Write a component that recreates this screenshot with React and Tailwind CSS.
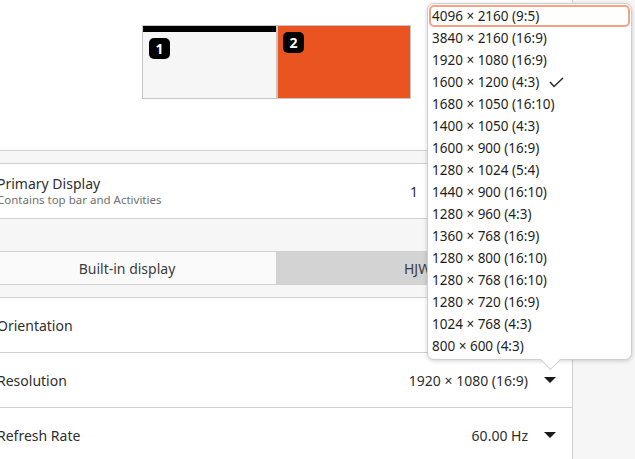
const resolutions = [
    "4096 × 2160 (9:5)",
    "3840 × 2160 (16:9)",
    "1920 × 1080 (16:9)",
    "1600 × 1200 (4:3)",
    "1680 × 1050 (16:10)",
    "1400 × 1050 (4:3)",
    "1600 × 900 (16:9)",
    "1280 × 1024 (5:4)",
    "1440 × 900 (16:10)",
    "1280 × 960 (4:3)",
    "1360 × 768 (16:9)",
    "1280 × 800 (16:10)",
    "1280 × 768 (16:10)",
    "1280 × 720 (16:9)",
    "1024 × 768 (4:3)",
    "800 × 600 (4:3)",
];

const DownArrow = () => (
    <svg width="12" height="6" viewBox="0 0 12 6" className="shrink-0">
        <path d="M0 0 L12 0 L6 6 Z" fill="#1a1a1a" />
    </svg>
);

const CheckMark = () => (
    <svg width="15" height="11" viewBox="0 0 15 11" className="ml-[10px] shrink-0">
        <polyline points="1,5 5,9.5 14,1" fill="none" stroke="#2a2a2a" strokeWidth="1.5" />
    </svg>
);

const Badge = ({ n }) => (
    <div className="w-[21px] h-[21px] rounded-[5px] bg-black text-white flex items-center justify-center text-[14px] font-bold leading-none">
        {n}
    </div>
);

const SettingRow = ({ label, value }) => (
    <div className="h-[55px] shrink-0 border-b border-[#d0d0d0] flex items-center bg-white">
        <span className="-ml-[3px] text-[14px] text-[#2e2e2e]">{label}</span>
        {value && (
            <div className="ml-auto flex items-center gap-[16px] pr-[16px] text-[14px] text-[#2e2e2e]">
                <span>{value}</span>
                <DownArrow />
            </div>
        )}
    </div>
);

export default function App() {
    return (
        <div className="relative w-[635px] h-[459px] overflow-hidden bg-white flex font-['Noto_Sans',sans-serif]">
            {/* main panel */}
            <div className="w-[573px] shrink-0 border-r border-[#d0d0d0] flex flex-col overflow-hidden">
                {/* display arrangement */}
                <div className="h-[150px] shrink-0 pt-[25px] pl-[142px] flex items-start">
                    <div className="w-[135px] h-[74px] border border-[#c6c6c6] bg-[#f6f6f6] flex flex-col">
                        <div className="h-[6px] bg-black" />
                        <div className="pl-[6px] pt-[6px]">
                            <Badge n="1" />
                        </div>
                    </div>
                    <div className="w-[134px] h-[74px] border border-[#c6c6c6] bg-[#e95420] pl-[5px] pt-[6px]">
                        <Badge n="2" />
                    </div>
                </div>

                <div className="h-[14px] shrink-0 border-y border-[#d0d0d0] bg-[#f6f6f6]" />

                {/* primary display */}
                <div className="h-[55px] shrink-0 border-b border-[#d0d0d0] flex items-center">
                    <div className="-ml-[3px] flex flex-col leading-tight">
                        <span className="text-[14px] text-[#2e2e2e]">Primary Display</span>
                        <span className="text-[11.5px] text-[#707070]">Contains top bar and Activities</span>
                    </div>
                    <span className="ml-auto mr-[154px] text-[14px] text-[#2e2e2e]">1</span>
                </div>

                <div className="h-[33px] shrink-0 border-b border-[#d0d0d0] bg-[#f6f6f6]" />

                {/* display tabs */}
                <div className="h-[33px] shrink-0 -ml-[22px] border-b border-[#d0d0d0] flex text-[14px] text-[#3d3d3d]">
                    <div className="w-[299px] shrink-0 border-r border-[#d0d0d0] bg-[#fafafa] flex items-center justify-center">
                        Built-in display
                    </div>
                    <div className="flex-1 bg-[#d3d3d3] flex items-center pl-[127px]">
                        HJW
                    </div>
                </div>

                <div className="h-[13px] shrink-0 border-b border-[#d0d0d0] bg-[#f6f6f6]" />

                <SettingRow label="Orientation" />
                <SettingRow label="Resolution" value="1920 × 1080 (16:9)" />
                <SettingRow label="Refresh Rate" value="60.00 Hz" />
            </div>

            <div className="flex-1 bg-[#f6f6f6]" />

            {/* resolution popover */}
            <div className="absolute left-[427px] top-[3px] w-[205px] h-[357px] bg-white border border-[#cfcfcf] rounded-[7px] shadow-[0_1px_4px_rgba(0,0,0,0.18)] px-[1px] pt-[1px]">
                <div className="relative z-10 flex flex-col">
                    {resolutions.map((r, i) => (
                        <div
                            key={r}
                            className={`h-[22px] px-[1px] border-2 rounded-[5px] flex items-center text-[13.5px] text-[#1e1e1e] ${i === 0 ? "border-[#f3a385]" : "border-transparent"}`}
                        >
                            <span>{r}</span>
                            {i === 3 && <CheckMark />}
                        </div>
                    ))}
                </div>
                <div className="absolute left-[115px] top-[348px] w-[15px] h-[15px] bg-white border-r border-b border-[#cfcfcf] rotate-45" />
            </div>
        </div>
    );
}
